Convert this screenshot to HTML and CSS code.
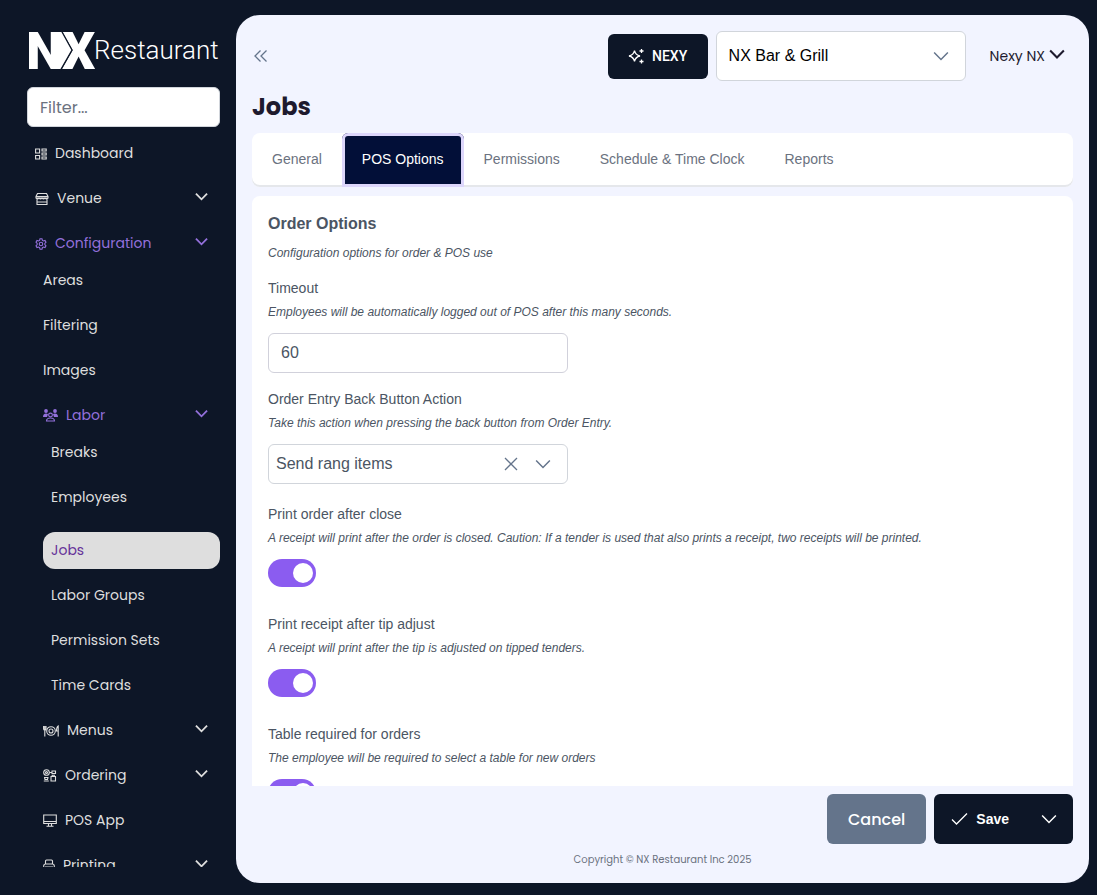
FILE: index.html
```html
<!DOCTYPE html>
<html lang="en">
<head>
  <meta charset="UTF-8">
  <meta name="viewport" content="width=device-width, initial-scale=1.0">
  <title>Jobs - NX Restaurant</title>
  <link rel="stylesheet" href="styles.css">
</head>
<body>
  <!-- Shared chevron -->
  <svg class="defs" width="0" height="0" aria-hidden="true">
    <symbol id="chevron" viewBox="0 0 14 14"><path d="M1 4l6 6 6-6"/></symbol>
  </svg>

  <aside class="sidebar">
    <svg class="logo" width="190" height="40" viewBox="0 0 190 40" role="img" aria-label="NX Restaurant">
      <text class="logo-mark" x="-3" y="37">N</text>
      <text class="logo-mark" x="33" y="37">X</text>
      <path class="logo-arrow" d="M24 0h9l10 18-11 19h-8z"/>
      <path class="logo-gap" d="M32 -2l11 20-12 21"/>
      <text class="logo-name" x="65" y="27">Restaurant</text>
    </svg>
    <input class="filter" type="text" placeholder="Filter..." aria-label="Filter menu">
    <nav class="nav">
      <ul class="menu">
        <li><a class="item" href="#">
          <svg class="icon" width="12" height="12" viewBox="0 0 12 12"><path d="M.6 1h4v4h-4zM.6 7.500h4v3.500h-4zM7 1h4.200v2H7zM7 5h4.200v2H7zM7 9h4.200v2H7z"/></svg>
          Dashboard</a></li>
        <li><a class="item" href="#">
          <svg class="icon" width="14" height="14" viewBox="0 0 14 14"><path d="M2.500 1.500h9l1.500 3v1.500H1V4.500zM1 4.500h12M1 6q1.500 2 3 0 1.500 2 3 0 1.500 2 3 0 1.500 2 3 0M2 7.500v5h10v-5M2 10h10"/></svg>
          Venue <svg class="caret" width="13" height="13"><use href="#chevron"/></svg></a></li>
        <li><a class="item open" href="#">
          <svg class="icon" width="12" height="12" viewBox="0 0 24 24"><path class="thick" d="M10 1.500h4l.8 3.200 2 1.200 3.200-1 2 3.600-2.300 2.300v2.400l2.300 2.300-2 3.600-3.200-1-2 1.200-.8 3.200h-4l-.8-3.200-2-1.200-3.200 1-2-3.600 2.300-2.300v-2.400L2 8.500l2-3.600 3.200 1 2-1.200z"/><circle class="thick" cx="12" cy="12" r="3.500"/></svg>
          Configuration <svg class="caret" width="13" height="13"><use href="#chevron"/></svg></a>
          <ul class="menu sub">
            <li><a class="item" href="#">Areas</a></li>
            <li><a class="item" href="#">Filtering</a></li>
            <li><a class="item" href="#">Images</a></li>
            <li><a class="item open" href="#">
              <svg class="icon" width="15" height="13" viewBox="0 0 15 13"><g class="solid"><circle cx="3" cy="2" r="1.900"/><circle cx="12" cy="2" r="1.900"/><path d="M0 8q0-3.500 3-3.500 1.500 0 2 .8L4 8zM15 8q0-3.500-3-3.500-1.500 0-2 .8L11 8z"/></g><circle cx="7.500" cy="6" r="1.900"/><path d="M3.500 12q0-3 4-3t4 3z"/></svg>
              Labor <svg class="caret" width="13" height="13"><use href="#chevron"/></svg></a>
              <ul class="menu sub">
                <li><a class="item" href="#">Breaks</a></li>
                <li><a class="item" href="#">Employees</a></li>
                <li class="current"><a class="item" href="#" aria-current="page">Jobs</a></li>
                <li><a class="item" href="#">Labor Groups</a></li>
                <li><a class="item" href="#">Permission Sets</a></li>
                <li><a class="item" href="#">Time Cards</a></li>
              </ul>
            </li>
            <li><a class="item" href="#">
              <svg class="icon" width="16" height="12" viewBox="0 0 16 12"><circle cx="8" cy="6" r="4.300"/><circle cx="8" cy="6" r="2"/><path d="M.6 1v3q0 1 1.200 1T3 4V1M1.800 1v10.500M15.200 11.500V1q-1.700 1-1.700 5h1.700"/></svg>
              Menus <svg class="caret" width="13" height="13"><use href="#chevron"/></svg></a></li>
            <li><a class="item" href="#">
              <svg class="icon" width="14" height="13" viewBox="0 0 14 13"><circle cx="3.500" cy="3.500" r="2.800"/><circle cx="3.500" cy="3.500" r="1"/><path d="M6.500 3.500H9M9 2h3.500v2.500H9zM1 8.500h4.500M1.500 8.500l.5 2h2.500l.5-2M.8 12h5M8 7.500h4.500V12H8zM9.200 7.500V6.200h2.100v1.300"/></svg>
              Ordering <svg class="caret" width="13" height="13"><use href="#chevron"/></svg></a></li>
            <li><a class="item" href="#">
              <svg class="icon" width="14" height="13" viewBox="0 0 14 13"><path d="M.7 1h12.600v8.500H.7zM.7 7.500h12.600M5.500 9.500V12M8.500 9.500V12M3.500 12.200h7"/></svg>
              POS App</a></li>
            <li><a class="item" href="#">
              <svg class="icon" width="12" height="13" viewBox="0 0 12 13"><path d="M2.500 5V2q0-1 1-1h5q1 0 1 1v3M.7 10V7q0-2 2-2h6.600q2 0 2 2v3zM2.500 8h7v4.500h-7z"/></svg>
              Printing <svg class="caret" width="13" height="13"><use href="#chevron"/></svg></a></li>
          </ul>
        </li>
      </ul>
    </nav>
  </aside>

  <main class="main">
    <header class="topbar">
      <button class="collapse" type="button" aria-label="Collapse menu">
        <svg width="16" height="14" viewBox="0 0 16 14"><path d="M8.500 1.500L3 7l5.500 5.500M14.500 1.500L9 7l5.500 5.500"/></svg>
      </button>
      <button class="nexy" type="button">
        <svg width="16" height="16" viewBox="0 0 16 16"><path d="M6.500 2.500q.9 4.600 5.500 5.500-4.600.9-5.500 5.500Q5.600 8.900 1 8q4.600-.9 5.500-5.500zM13.500 1v4M11.500 3h4M13.500 11.500v4M11.500 13.500h4"/></svg>
        NEXY
      </button>
      <div class="select venue">
        <select aria-label="Venue"><option>NX Bar &amp; Grill</option></select>
        <svg class="arrow" width="16" height="16"><use href="#chevron"/></svg>
      </div>
      <button class="user" type="button">Nexy NX <svg width="16" height="16"><use href="#chevron"/></svg></button>
    </header>

    <h1 class="title">Jobs</h1>

    <div class="tabs" role="tablist">
      <button class="tab" type="button" role="tab">General</button>
      <button class="tab active" type="button" role="tab" aria-selected="true">POS Options</button>
      <button class="tab" type="button" role="tab">Permissions</button>
      <button class="tab" type="button" role="tab">Schedule &amp; Time Clock</button>
      <button class="tab" type="button" role="tab">Reports</button>
    </div>

    <section class="panel">
      <h2>Order Options</h2>
      <p class="hint intro">Configuration options for order &amp; POS use</p>

      <div class="field">
        <label for="timeout">Timeout</label>
        <p class="hint">Employees will be automatically logged out of POS after this many seconds.</p>
        <input class="number" id="timeout" type="text" value="60">
      </div>

      <div class="field select-field">
        <label for="back-action">Order Entry Back Button Action</label>
        <p class="hint">Take this action when pressing the back button from Order Entry.</p>
        <div class="select action">
          <select id="back-action"><option>Send rang items</option></select>
          <button class="clear" type="button" aria-label="Clear">
            <svg width="14" height="14" viewBox="0 0 14 14"><path d="M1 1l12 12M13 1L1 13"/></svg>
          </button>
          <svg class="arrow" width="16" height="16"><use href="#chevron"/></svg>
        </div>
      </div>

      <div class="field switch-field">
        <label for="print-close">Print order after close</label>
        <p class="hint">A receipt will print after the order is closed. Caution: If a tender is used that also prints a receipt, two receipts will be printed.</p>
        <input class="switch" id="print-close" type="checkbox" checked>
      </div>

      <div class="field switch-field">
        <label for="print-tip">Print receipt after tip adjust</label>
        <p class="hint">A receipt will print after the tip is adjusted on tipped tenders.</p>
        <input class="switch" id="print-tip" type="checkbox" checked>
      </div>

      <div class="field switch-field">
        <label for="table-required">Table required for orders</label>
        <p class="hint">The employee will be required to select a table for new orders</p>
        <input class="switch" id="table-required" type="checkbox" checked>
      </div>
    </section>

    <div class="actions">
      <button class="cancel" type="button">Cancel</button>
      <div class="split">
        <button class="save" type="button">
          <svg width="17" height="14" viewBox="0 0 17 14"><path d="M1 7.500L5.500 12 16 1.500"/></svg>
          Save
        </button>
        <button class="more" type="button" aria-label="More save options">
          <svg width="16" height="16"><use href="#chevron"/></svg>
        </button>
      </div>
    </div>
    <footer class="copyright">Copyright © NX Restaurant Inc 2025</footer>
  </main>
</body>
</html>
```
FILE: styles.css
```css
* {
  box-sizing: border-box;
}

body {
  display: flex;
  height: 100vh;
  margin: 0;
  overflow: hidden;
  background-color: #0d1627;
  font-family: Poppins, Inter, sans-serif;
}

h1, h2, p, ul {
  margin: 0;
  padding: 0;
}

button, input, select {
  font-family: inherit;
}

button {
  padding: 0;
  border: none;
  background: none;
  cursor: pointer;
}

svg {
  flex-shrink: 0;
  fill: none;
  stroke: currentColor;
  stroke-width: 1.3;
}

.defs {
  position: absolute;
}

/* Sidebar */
.sidebar {
  display: flex;
  flex-direction: column;
  flex-shrink: 0;
  width: 236px;
  padding: 32px 16px 28px 27px;
}

.logo {
  display: block;
  margin: 0 0 15px 2px;
}

.logo-mark {
  fill: #fff;
  stroke: none;
  font: 900 52px Roboto, sans-serif;
}

.logo-arrow {
  fill: #fff;
  stroke: none;
}

.logo-gap {
  stroke: #0d1627;
}

.logo-name {
  fill: #fff;
  stroke: none;
  font: 300 26px Roboto, sans-serif;
}

.filter {
  width: 100%;
  height: 40px;
  padding: 0 12px;
  border: 1px solid #d1d5db;
  border-radius: 6px;
  background-color: #fff;
  color: #4b5563;
  font-size: 16px;
  flex-shrink: 0;
}

.filter::placeholder {
  color: #6b7280;
}

.nav {
  flex: 1;
  min-height: 0;
  margin-top: 8px;
  overflow: hidden;
}

.menu {
  display: flex;
  flex-direction: column;
  gap: 8px;
  list-style: none;
}

.sub {
  padding-left: 8px;
}

.item {
  display: flex;
  align-items: center;
  gap: 8px;
  height: 37px;
  padding: 0 12px 0 8px;
  border-radius: 12px;
  color: #dedede;
  font-size: 14px;
  text-decoration: none;
}

.item.open {
  color: #9370db;
}

.icon {
  stroke-width: 1.1;
}

.thick {
  stroke-width: 2.2;
}

.solid {
  fill: currentColor;
  stroke: none;
}

.caret {
  margin: 0 0 4px auto;
  stroke-width: 2;
}

.current {
  margin-top: 8px;
}

.current .item {
  background-color: #dedede;
  color: #663399;
}

/* Main area */
.main {
  display: flex;
  flex: 1;
  flex-direction: column;
  min-width: 0;
  margin: 15px 8px 12px 0;
  padding: 16px;
  border-radius: 24px;
  background-color: #f2f4ff;
}

.topbar {
  display: flex;
  align-items: center;
  gap: 8px;
}

.collapse {
  display: flex;
  margin-right: auto;
  color: #64748b;
}

.nexy {
  display: flex;
  align-items: center;
  justify-content: center;
  gap: 8px;
  width: 100px;
  height: 45px;
  border-radius: 6px;
  background-color: #0d1627;
  color: #fff;
  font: 500 14px Roboto, sans-serif;
}

.select {
  position: relative;
  font-family: "Liberation Sans", Arial, sans-serif;
}

.select select {
  width: 100%;
  height: 100%;
  padding-bottom: 2px;
  border: 1px solid #d1d5db;
  border-radius: 6px;
  background-color: #fff;
  font-size: 16px;
  appearance: none;
}

.arrow {
  position: absolute;
  top: 50%;
  right: 17px;
  color: #64748b;
  transform: translateY(-50%);
  pointer-events: none;
}

.venue {
  width: 250px;
  height: 50px;
}

.venue select {
  padding-left: 12px;
  color: #000;
}

.user {
  display: flex;
  align-items: center;
  gap: 4px;
  margin: 0 8px 0 16px;
  color: #1e1a2e;
  font-size: 14px;
}

.user svg {
  margin-bottom: 4px;
  stroke-width: 1.8;
}

.title {
  margin: 8px 0;
  color: #1e1a2e;
  font-size: 24px;
  font-weight: 700;
  line-height: 36px;
}

.tabs {
  display: flex;
  flex-shrink: 0;
  height: 54px;
  border-radius: 8px;
  background-color: #fff;
  box-shadow: inset 0 -2px #e5e7eb;
}

.tab {
  padding: 0 20px 2px;
  color: #6b7280;
  font: 14px "Liberation Sans", Arial, sans-serif;
}

.tab.active {
  border-radius: 6px 6px 0 0;
  background-color: #020f38;
  box-shadow: inset 0 0 0 3px #ddd6fb;
  color: #fff;
}

.panel {
  flex: 1;
  min-height: 0;
  margin-top: 9px;
  padding: 16px;
  overflow: hidden;
  border-radius: 8px 8px 0 0;
  background-color: #fff;
  color: #4b5563;
  font-family: "Liberation Sans", Arial, sans-serif;
}

.panel h2 {
  font-size: 16px;
  line-height: 24px;
}

.hint {
  font-size: 12px;
  font-style: italic;
  line-height: 18px;
}

.intro {
  margin: 8px 0 16px;
}

.field {
  display: flex;
  flex-direction: column;
  align-items: flex-start;
  margin-bottom: 16px;
}

.field label {
  margin-bottom: 4px;
  font-size: 14px;
  line-height: 21px;
}

.field .hint {
  margin-bottom: 12px;
}

.select-field {
  margin-bottom: 20px;
}

.switch-field {
  margin-bottom: 27px;
}

.number,
.action {
  width: 300px;
  height: 40px;
}

.number {
  padding: 0 12px;
  border: 1px solid #d1d1db;
  border-radius: 6px;
  color: #4b5563;
  font-size: 16px;
}

.action select {
  padding-left: 7px;
  color: #4b5563;
}

.clear {
  position: absolute;
  top: 0;
  right: 50px;
  display: flex;
  align-items: center;
  height: 100%;
  color: #64748b;
}

.switch {
  display: flex;
  align-items: center;
  justify-content: flex-end;
  width: 48px;
  height: 28px;
  margin: 0;
  padding: 0 3px;
  border-radius: 14px;
  background-color: #cbd5e1;
  appearance: none;
}

.switch:checked {
  background-color: #8b5cf0;
}

.switch::before {
  content: '';
  width: 20px;
  height: 20px;
  border-radius: 50%;
  background-color: #fff;
}

/* Bottom bar */
.actions {
  display: flex;
  justify-content: flex-end;
  gap: 8px;
  padding-top: 8px;
}

.cancel {
  height: 50px;
  padding: 0 21px;
  border-radius: 6px;
  background-color: #64748b;
  color: #fff;
  font-size: 16px;
  font-weight: 500;
}

.split {
  display: flex;
  border-radius: 6px;
  background-color: #0d1627;
}

.save,
.more {
  display: flex;
  align-items: center;
  height: 50px;
  color: #fff;
}

.save {
  gap: 8px;
  padding: 0 16px 0 17px;
  font: bold 14px "Liberation Sans", Arial, sans-serif;
}

.more {
  padding: 0 16px;
}

.copyright {
  padding-top: 8px;
  color: #6b7280;
  font-size: 10px;
  line-height: 15px;
  text-align: center;
}
```
